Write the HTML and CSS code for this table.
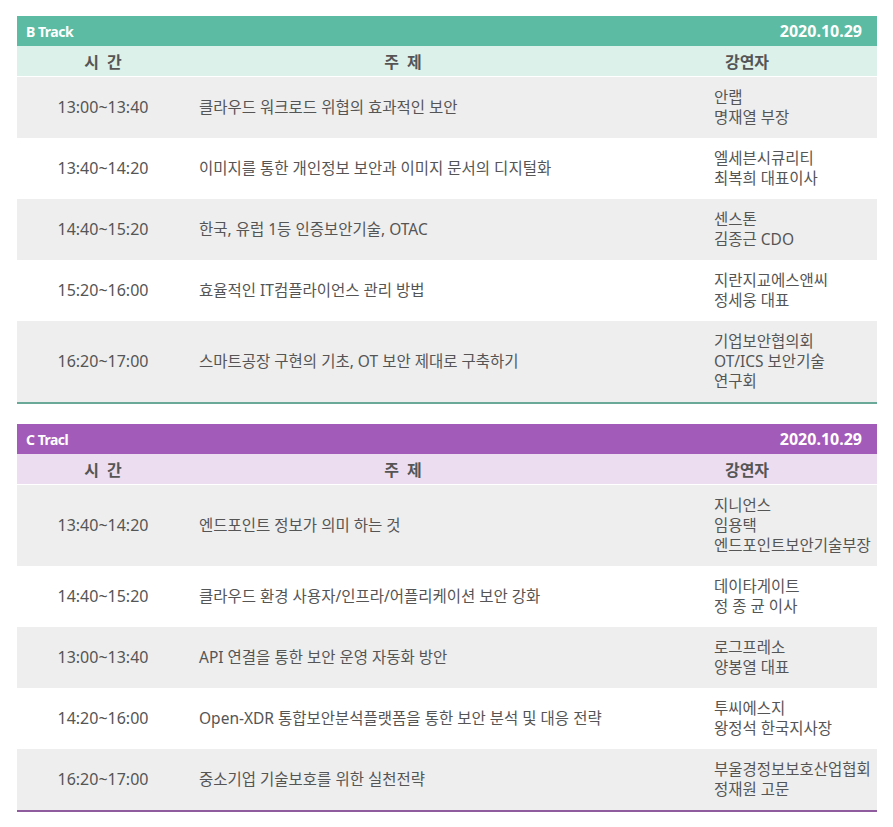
FILE: index.html
```html
<!DOCTYPE html>
<html lang="ko">
<head>
<meta charset="utf-8">
<title>Track Schedule</title>
<link rel="stylesheet" href="styles.css">
</head>
<body>
<div class="page">
  <section class="track track-b">
    <div class="track-title">
      <span class="track-name">B Track</span>
      <span class="track-date">2020.10.29</span>
    </div>
    <table class="schedule">
      <colgroup><col class="c-time"><col class="c-subj"><col class="c-spk"></colgroup>
      <thead>
        <tr><th>시 간</th><th>주 제</th><th>강연자</th></tr>
      </thead>
      <tbody>
        <tr class="odd"><td class="time">13:00~13:40</td><td class="subj">클라우드 워크로드 위협의 효과적인 보안</td><td class="spk">안랩<br>명재열 부장</td></tr>
        <tr><td class="time">13:40~14:20</td><td class="subj">이미지를 통한 개인정보 보안과 이미지 문서의 디지털화</td><td class="spk">엘세븐시큐리티<br>최복희 대표이사</td></tr>
        <tr class="odd"><td class="time">14:40~15:20</td><td class="subj">한국, 유럽 1등 인증보안기술, OTAC</td><td class="spk">센스톤<br>김종근 CDO</td></tr>
        <tr><td class="time">15:20~16:00</td><td class="subj">효율적인 IT컴플라이언스 관리 방법</td><td class="spk">지란지교에스앤씨<br>정세웅 대표</td></tr>
        <tr class="odd last"><td class="time">16:20~17:00</td><td class="subj">스마트공장 구현의 기초, OT 보안 제대로 구축하기</td><td class="spk">기업보안협의회<br>OT/ICS 보안기술<br>연구회</td></tr>
      </tbody>
    </table>
  </section>

  <section class="track track-c">
    <div class="track-title">
      <span class="track-name">C Tracl</span>
      <span class="track-date">2020.10.29</span>
    </div>
    <table class="schedule">
      <colgroup><col class="c-time"><col class="c-subj"><col class="c-spk"></colgroup>
      <thead>
        <tr><th>시 간</th><th>주 제</th><th>강연자</th></tr>
      </thead>
      <tbody>
        <tr class="odd"><td class="time">13:40~14:20</td><td class="subj">엔드포인트 정보가 의미 하는 것</td><td class="spk">지니언스<br>임용택<br>엔드포인트보안기술부장</td></tr>
        <tr><td class="time">14:40~15:20</td><td class="subj">클라우드 환경 사용자/인프라/어플리케이션 보안 강화</td><td class="spk">데이타게이트<br>정 종 균 이사</td></tr>
        <tr class="odd"><td class="time">13:00~13:40</td><td class="subj">API 연결을 통한 보안 운영 자동화 방안</td><td class="spk">로그프레소<br>양봉열 대표</td></tr>
        <tr><td class="time">14:20~16:00</td><td class="subj">Open-XDR 통합보안분석플랫폼을 통한 보안 분석 및 대응 전략</td><td class="spk">투씨에스지<br>왕정석 한국지사장</td></tr>
        <tr class="odd last"><td class="time">16:20~17:00</td><td class="subj">중소기업 기술보호를 위한 실천전략</td><td class="spk">부울경정보보호산업협회<br>정재원 고문</td></tr>
      </tbody>
    </table>
  </section>
</div>
</body>
</html>
```

FILE: styles.css
```css
html, body {
  margin: 0;
  padding: 0;
  background: #ffffff;
}

body {
  font-family: "Noto Sans", "Noto Sans CJK KR", sans-serif;
  color: #555555;
}

.page {
  padding: 16px 0 0 17px;
  width: 860px;
  display: flex;
  flex-direction: column;
  gap: 20px;
}

.track-title {
  height: 30px;
  display: flex;
  align-items: center;
  justify-content: space-between;
  padding: 0 15px 0 9px;
  color: #ffffff;
  font-weight: bold;
}

.track-name {
  font-size: 14px;
  letter-spacing: -0.5px;
}

.track-date {
  font-size: 16px;
}

.track-b .track-title { background: #5bbba3; }
.track-c .track-title { background: #a35bb9; }

.schedule {
  width: 860px;
  border-collapse: collapse;
  table-layout: fixed;
  font-size: 15.5px;
}

.c-time { width: 172px; }
.c-subj { width: 428px; }
.c-spk { width: 260px; }

.schedule th {
  height: 30px;
  padding: 0;
  font-size: 16px;
  font-weight: bold;
  color: #555555;
  text-align: center;
  border-bottom: 1px solid #ffffff;
  word-spacing: 4px;
}

.track-b .schedule th { background: #ddf1eb; }
.track-c .schedule th { background: #ecdef0; }

.schedule td {
  padding: 10px 0 11px;
  line-height: 20px;
  vertical-align: middle;
}

.schedule tbody tr { background: #ffffff; }
.schedule tbody tr.odd { background: #eeeeee; }

.schedule td.time { text-align: center; font-size: 16px; }
.schedule td.subj { padding-left: 10px; text-align: left; }
.schedule td.spk { padding-left: 97px; text-align: left; }

.track-b .schedule tr.last td { border-bottom: 2px solid #6aa997; }
.track-c .schedule tr.last td { border-bottom: 2px solid #8f5d9d; }
```
